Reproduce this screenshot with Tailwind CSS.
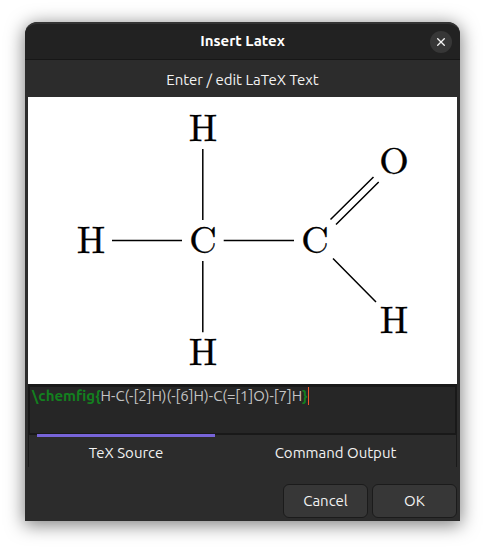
<!DOCTYPE html>
<html lang="en">
<head>
<meta charset="utf-8">
<meta name="viewport" content="width=device-width, initial-scale=1">
<title>Insert Latex</title>
<script src="https://cdn.jsdelivr.net/npm/@tailwindcss/browser@4"></script>
</head>
<body class="flex min-h-screen bg-white px-[25px] pt-[22px] pb-7 font-['Ubuntu','Noto_Sans',sans-serif] text-[15px] leading-5 text-[#f2f2f2]">
<main role="dialog" aria-labelledby="title" class="flex flex-1 flex-col overflow-hidden rounded-t-xl bg-[#2c2c2c] shadow-[0_3px_18px_1px_rgba(0,0,0,0.5)]">
  <header class="grid h-[38px] grid-cols-[1fr_auto_1fr] items-center rounded-t-xl border-t-2 border-b border-t-[#343434] border-b-[#171717] bg-[#222222] px-2">
    <h1 id="title" class="col-start-2 pb-0.5 text-[15px] font-bold text-white">Insert Latex</h1>
    <button type="button" aria-label="Close" class="flex size-[22px] items-center justify-center justify-self-end rounded-full bg-[#373737]">
      <svg class="size-2" viewBox="0 0 8 8" fill="none" stroke="#f4f4f4" stroke-width="1.3" aria-hidden="true"><path d="M0.3 0.3 7.7 7.7M7.7 0.3 0.3 7.7"/></svg>
    </button>
  </header>
  <div class="flex flex-1 flex-col px-[3px] pb-[3px]">
    <label for="source" class="flex h-[37px] items-center justify-center pt-0.5">Enter / edit LaTeX Text</label>
    <div class="flex flex-1 items-center justify-center bg-white">
      <svg class="w-full" viewBox="0 0 429 287" role="img" aria-label="Acetaldehyde structure">
        <g stroke="#000" stroke-width="1.5" fill="none">
          <path d="M174.8 52V123M174.8 164V235.3M84 143.5H154M195.7 143.5H266"/>
          <path d="M302.5 122.5 345.5 80M308 127.5 350.7 85M305 161.5 348 205"/>
        </g>
        <g class="font-['LM_Roman_10','Latin_Modern_Roman','Liberation_Serif',serif]" font-size="38" text-anchor="middle" fill="#000" stroke="#000" stroke-width="0.3">
          <text x="175" y="44">H</text>
          <text x="63" y="156">H</text>
          <text x="175" y="156">C</text>
          <text x="287" y="156">C</text>
          <text x="175" y="268">H</text>
          <text x="366" y="77">O</text>
          <text x="366" y="236">H</text>
        </g>
      </svg>
    </div>
    <div class="relative h-[51px] border-x-2 border-t-[3px] border-b-2 border-[#191919] bg-[#262626]">
      <pre aria-hidden="true" class="flex px-0.5 font-['Ubuntu','Noto_Sans',sans-serif] text-[15px] leading-[18px] text-[#c4c4c4]"><b class="text-[#13801f]">\chemfig{</b>H-C(-[2]H)(-[6]H)-C(=[1]O)-[7]H<b class="text-[#13801f]">}</b><span class="w-px bg-[#f0592a]"></span></pre>
      <textarea id="source" spellcheck="false" class="absolute inset-0 resize-none overflow-hidden bg-transparent px-0.5 text-[15px] leading-[18px] text-transparent caret-transparent outline-none">\chemfig{H-C(-[2]H)(-[6]H)-C(=[1]O)-[7]H}</textarea>
    </div>
    <div role="tablist" class="relative -mt-px flex h-[33px] justify-center gap-2 border-x border-[#1a1a1a] px-2">
      <button type="button" role="tab" aria-selected="true" class="flex-auto border-t-[3px] border-[#7764d8] pt-0.5">TeX Source</button>
      <button type="button" role="tab" aria-selected="false" class="flex-auto border-t-[3px] border-transparent pt-0.5">Command Output</button>
    </div>
    <div class="mt-[17px] flex justify-end gap-1">
      <button type="button" class="h-[34px] w-[85px] rounded-md border border-[#1b1b1b] bg-[#373737]">Cancel</button>
      <button type="button" class="h-[34px] w-[85px] rounded-md border border-[#1b1b1b] bg-[#373737]">OK</button>
    </div>
  </div>
</main>
</body>
</html>
